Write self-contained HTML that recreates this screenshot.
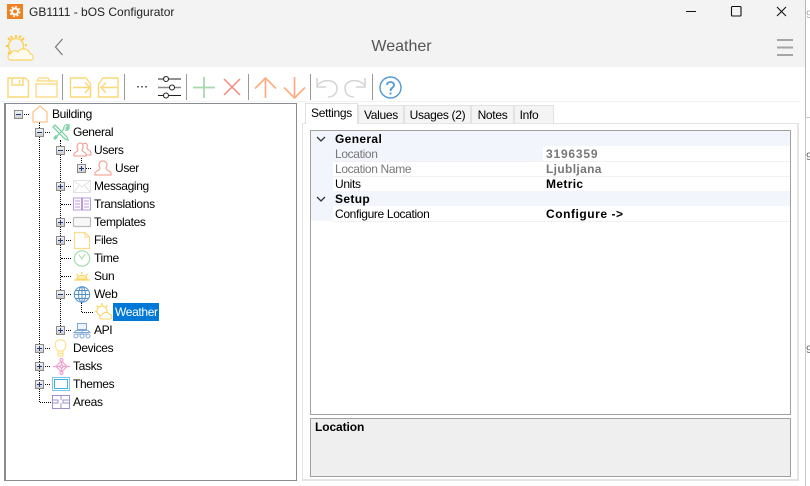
<!DOCTYPE html>
<html><head><meta charset="utf-8"><style>
html,body{margin:0;padding:0;width:810px;height:486px;overflow:hidden;background:#fff}
*{box-sizing:border-box}
.a{position:absolute}
.t{position:absolute;font:12px/15px "WenQuanYi Zen Hei","Liberation Sans",sans-serif;color:#000;white-space:nowrap;letter-spacing:-.35px}
.b{font-weight:bold;letter-spacing:.35px}
.tab{position:absolute;top:105px;height:18px;background:#f4f4f4;border:1px solid #e2e2e2;border-bottom:0;font:12px/18px "WenQuanYi Zen Hei","Liberation Sans",sans-serif;text-align:center;color:#000;letter-spacing:-.3px}
.exp{position:absolute;width:9px;height:9px;background:linear-gradient(#f2f2f2,#cfcfcf);border:1px solid #8a8a8a}
.exp:before{content:"";position:absolute;left:1px;top:3px;width:5px;height:1px;background:#1f3a7a}
.p:after{content:"";position:absolute;left:3px;top:1px;width:1px;height:5px;background:#1f3a7a}
.dv{position:absolute;width:0;border-left:1px dotted #000}
.dh{position:absolute;height:0;border-top:1px dotted #000}
.sep{position:absolute;top:74px;width:1px;height:26px;background:#999}
svg{position:absolute;overflow:visible;fill:none}
</style></head><body>
<div class="a" style="left:0;top:0;width:805px;height:67px;background:#f3f3f3"></div>
<div class="a" style="left:805px;top:0;width:1px;height:117px;background:#b8b8b8"></div>
<div class="a" style="left:805px;top:117px;width:5px;height:1px;background:#c8c8c8"></div>
<div class="a" style="left:805px;top:117px;width:1px;height:369px;background:#c8c8c8"></div>
<div class="t" style="left:806px;top:8px;color:#aaa;font-size:11px">9</div>
<div class="t" style="left:806px;top:150px;color:#666;font-size:11px">9</div>
<div class="t" style="left:806px;top:343px;color:#666;font-size:11px">9</div>

<!-- title bar -->
<div class="a" style="left:7px;top:4px;width:16px;height:15px;background:#ee8222"></div>
<svg style="left:7px;top:4px" width="16" height="15"><circle cx="8" cy="7.5" r="3" stroke="#fff" stroke-width="2"/><circle cx="8" cy="7.5" r="4.8" stroke="#fff" stroke-width="1.4" stroke-dasharray="2 1.77"/></svg>
<div class="t" style="left:29px;top:4px;font:12px/16px 'Liberation Sans',sans-serif;color:#222;letter-spacing:0">GB1111 - bOS Configurator</div>
<svg style="left:686px;top:5px" width="115" height="16" stroke="#111"><path d="M0 6.5H10"/><rect x="45.5" y="1.5" width="9.5" height="9.5" rx="1" stroke-width="1.1"/><path d="M91 2L100 11M100 2L91 11" stroke-width="1.1"/></svg>

<!-- header -->
<svg style="left:6px;top:34px" width="30" height="28" stroke="#fbd568" stroke-width="1.2"><circle cx="10" cy="12" r="7.500" stroke-width="1.600"/><path d="M10 1V3.500M2 4L4 6M0 12H2.500M18 4L16 6M21 11H19M2 20L4 18M14.500 1.500L13.500 4M5 2L6 4.500" stroke-width="2" stroke="#fbc83e"/><path d="M5 26C1 26 1 20 5 19.500C6 16 11 16 12 18C15 13 23 14 24 20C28 20 28 26 25 26Z" fill="#fdfaf0"/></svg>
<svg style="left:54px;top:38px" width="10" height="18" stroke="#777" stroke-width="1.2"><path d="M8.500 1L1.500 9L8.500 17"/></svg>
<div class="t" style="left:300px;top:38px;width:203px;text-align:center;font:16px/18px 'Liberation Sans',sans-serif;color:#555;letter-spacing:0">Weather</div>
<svg style="left:777px;top:38px" width="17" height="18" stroke="#a5a5a5" stroke-width="2"><path d="M0 2H16M0 9.500H16M0 17H16"/></svg>

<!-- toolbar -->
<div class="a" style="left:0;top:101px;width:800px;height:1px;background:#f2f2f2"></div>
<svg style="left:7px;top:76px" width="180" height="24" stroke="#fcd777" stroke-width="1.400">
<path d="M1 2H18L21.500 5V21H1Z"/><path d="M5 2V9H16V2M12.500 4V7.500"/>
<path d="M29 7V21H50V5H43L41 2H32L30 5H43M29 8H50" stroke-width="1.200"/>
<path d="M63.500 2H79L83.500 8V21H63.500ZM66 11.500H82M78 6.500L83 11.500L78 17"/>
<path d="M91.500 8L96 2H111V21H91.500ZM94 11.500H110M99 6.500L94 11.500L99 17" />
</svg>
<svg style="left:136px;top:86px" width="12" height="3"><rect x="1" y="0" width="2" height="1.500" fill="#666"/><rect x="5" y="0" width="2" height="1.500" fill="#666"/><rect x="9" y="0" width="2" height="1.500" fill="#666"/></svg>
<svg style="left:158px;top:76px" width="24" height="23" stroke="#222" stroke-width="1.100"><path d="M0 3H5M11 3H23M0 19.500H5M11 19.500H23"/><path d="M0 11.500H11M17 11.500H23" stroke="#888" stroke-width="1.500"/><circle cx="8" cy="3" r="2.500"/><circle cx="14" cy="11.500" r="2.500"/><circle cx="8" cy="19.500" r="2.500"/></svg>
<svg style="left:193px;top:76px" width="230" height="24" stroke-width="1.600">
<path d="M11 1V22M0 11.500H22" stroke="#a5d9ae" stroke-width="1.800"/>
<path d="M31 3L47 19M47 3L31 19" stroke="#f08a7c" stroke-width="1.500"/>
<path d="M72.500 22V2M62 12.500L72.500 2L83 12.500" stroke="#fbae85" stroke-width="1.700"/>
<path d="M101.500 1V22M91 11.500L101.500 22L112 11.500" stroke="#fbae85" stroke-width="1.700"/>
<path d="M124 2V11H133M124 10C129 2 144 3 144 12C144 18 140 21 135 21" stroke="#d4d4d4" stroke-width="1.500"/>
<path d="M172 2V11H163M172 10C167 2 152 3 152 12C152 18 156 21 161 21" stroke="#d4d4d4" stroke-width="1.500"/>
</svg>
<svg style="left:379px;top:76px" width="23" height="23"><circle cx="11.500" cy="11.500" r="10.500" stroke="#4f9ad6" stroke-width="1.400"/><path d="M8 9C8 5 15 5 15 9C15 12 11.500 11.500 11.500 15" stroke="#4f9ad6" stroke-width="1.800"/><rect x="10.500" y="16.500" width="2" height="2" fill="#4f9ad6"/></svg>
<div class="sep" style="left:62px"></div><div class="sep" style="left:124px"></div><div class="sep" style="left:186px"></div><div class="sep" style="left:248px"></div><div class="sep" style="left:310px"></div><div class="sep" style="left:372px"></div>

<!-- tree -->
<div class="a" style="left:4px;top:103px;height:378px;border:1px solid #888c90;border-width:1px 1px 1px 2px;width:293px"></div>
<div class="dv" style="left:39px;top:122px;height:280px"></div>
<div class="dv" style="left:60px;top:140px;height:190px"></div>
<div class="dv" style="left:81px;top:158px;height:5px"></div>
<div class="dv" style="left:81px;top:302px;height:10px"></div>
<div class="dh" style="left:20px;top:114px;width:9px"></div>
<div class="dh" style="left:41px;top:132px;width:9px"></div>
<div class="dh" style="left:62px;top:150px;width:9px"></div>
<div class="dh" style="left:83px;top:168px;width:8px"></div>
<div class="dh" style="left:62px;top:186px;width:9px"></div>
<div class="dh" style="left:61px;top:204px;width:10px"></div>
<div class="dh" style="left:62px;top:222px;width:9px"></div>
<div class="dh" style="left:62px;top:240px;width:9px"></div>
<div class="dh" style="left:61px;top:258px;width:10px"></div>
<div class="dh" style="left:61px;top:276px;width:10px"></div>
<div class="dh" style="left:62px;top:294px;width:9px"></div>
<div class="dh" style="left:82px;top:312px;width:11px"></div>
<div class="dh" style="left:62px;top:330px;width:9px"></div>
<div class="dh" style="left:41px;top:348px;width:9px"></div>
<div class="dh" style="left:41px;top:366px;width:9px"></div>
<div class="dh" style="left:41px;top:384px;width:9px"></div>
<div class="dh" style="left:40px;top:402px;width:11px"></div>

<div class="exp" style="left:14px;top:110px"></div>
<div class="exp" style="left:35px;top:128px"></div>
<div class="exp" style="left:56px;top:146px"></div>
<div class="exp p" style="left:77px;top:164px"></div>
<div class="exp p" style="left:56px;top:182px"></div>
<div class="exp p" style="left:56px;top:218px"></div>
<div class="exp p" style="left:56px;top:236px"></div>
<div class="exp" style="left:56px;top:290px"></div>
<div class="exp p" style="left:56px;top:326px"></div>
<div class="exp p" style="left:35px;top:344px"></div>
<div class="exp p" style="left:35px;top:362px"></div>
<div class="exp p" style="left:35px;top:380px"></div>

<svg style="left:32px;top:105px" width="16" height="18" stroke="#fbc78e" stroke-width="1.300"><path d="M1 7L8 1L15 7V17H1Z"/></svg>
<svg style="left:52px;top:124px" width="18" height="17" stroke="#7fd1a5" stroke-width="1.300"><path d="M1 3L3 1L15 13L16 16L13 15ZM4 13L12 5M12 5C11 2 14 0 17 1L14 4L15 5L17 3C17 6 15 7 13 6"/><path d="M2 15L5 12" stroke-width="3"/></svg>
<svg style="left:73px;top:142px" width="19" height="15" stroke="#f39a8e" stroke-width="1.100"><path d="M1 14V12C1 10 5 10 5 8C3 4 5 1 7 1C10 1 11 4 9 8C9 10 13 10 13 12V14ZM10 2C13 0 15 2 14 6C14 8 18 8 18 11V13H13"/></svg>
<svg style="left:94px;top:160px" width="18" height="16" stroke="#f5a699" stroke-width="1.200"><path d="M1 15V13C1 11 6 11 6 8C4 5 5 1 9 1C13 1 14 5 12 8C12 11 17 11 17 13V15Z"/></svg>
<svg style="left:73px;top:180px" width="18" height="13" stroke="#e2e2e2" fill="#f9f9f9"><rect x=".5" y=".5" width="17" height="12"/><path d="M.5 .5L9 7L17.500 .5M.5 12.500L6 6M17.500 12.500L12 6"/></svg>
<svg style="left:73px;top:197px" width="18" height="14" stroke="#b99adf" stroke-width="1.100"><path d="M.5 1H8.500V13H.5ZM9.500 1H17.500V13H9.500ZM2 4H7M2 7H7M2 10H7M11 4H16M11 7H16M11 10H16" /></svg>
<svg style="left:73px;top:217px" width="18" height="10" stroke="#bbb" stroke-width="1.200"><rect x=".5" y=".5" width="17" height="9" rx="1" fill="#f8f8f8"/></svg>
<svg style="left:74px;top:232px" width="16" height="17" stroke="#fbdc8d" stroke-width="1.200"><path d="M.5 .5H11L15.500 5V16.500H.5ZM11 .5V5H15.500"/></svg>
<svg style="left:73px;top:250px" width="18" height="17" stroke="#a2dca9" stroke-width="1.200"><circle cx="9" cy="8.500" r="7.700"/><path d="M6 5L9 9L12 4" stroke-width="1"/></svg>
<svg style="left:74px;top:272px" width="16" height="9" stroke="#fbd568" stroke-width="1.100"><path d="M3 7C3 2 13 2 13 7Z" fill="#fdeeb8"/><path d="M8 0V2M2.500 2L4 3.500M13.500 2L12 3.500M0 8H16" stroke-width="1.300"/></svg>
<svg style="left:73px;top:286px" width="18" height="17" stroke="#4f8fc9" stroke-width="1"><circle cx="9" cy="8.500" r="7.700"/><ellipse cx="9" cy="8.500" rx="3.500" ry="7.700"/><path d="M1 8.500H17M9 1V16M2.500 4.500H15.500M2.500 12.500H15.500"/></svg>
<div class="a" style="left:113px;top:303px;width:46px;height:18px;background:#0078d7"></div>
<svg style="left:95px;top:303px" width="18" height="17" stroke="#fbd568" stroke-width="1.100"><circle cx="7" cy="8" r="5"/><path d="M7 0V2.500M1.500 2.500L3 4M0 8.500H1.500M12.500 2.500L11 4" stroke-width="1.400"/><path d="M7 16C4 16 4 12.500 7 12C8 9 13 8.500 14 11C17 11 18 16 15 16Z" fill="#fff"/></svg>
<svg style="left:73px;top:323px" width="18" height="15" stroke="#7fa8d6" stroke-width="1"><rect x="4.500" y=".5" width="9" height="6" fill="#eef4fb"/><path d="M1 9.500H17L15 7.500H3ZM9 7V11M3 11H15"/><circle cx="3" cy="13" r="2"/><circle cx="9" cy="13" r="2"/><circle cx="15" cy="13" r="2"/></svg>
<svg style="left:54px;top:339px" width="13" height="18" stroke="#fbe28d" stroke-width="1.200"><path d="M4 12C0 8 0 .8 6.500 .8C13 .8 13 8 9 12ZM4 12V17H9V12M4 14.500H9"/></svg>
<svg style="left:53px;top:358px" width="17" height="17" stroke="#f0a0cc" stroke-width="1.200"><path d="M8.500 3L14 8.500L8.500 14L3 8.500ZM0 8.500H17M8.500 0V17"/><circle cx="8.500" cy="8.500" r="1.500" fill="#fff"/><circle cx="8.500" cy="2" r="1.500" fill="#fff"/><circle cx="8.500" cy="15" r="1.500" fill="#fff"/></svg>
<svg style="left:52px;top:377px" width="18" height="14" stroke="#3fb0e3"><rect x=".5" y=".5" width="17" height="13" stroke="#7fc7ea"/><rect x="2.500" y="2.500" width="13" height="9"/></svg>
<svg style="left:52px;top:395px" width="18" height="14" stroke="#a08ccf" stroke-width="1"><rect x=".5" y=".5" width="17" height="13"/><path d="M.5 5H6V8H.5M17.500 5H11V8H17.500M9 .5V5M9 8V13.500"/></svg>

<div class="t" style="left:52px;top:107px">Building</div>
<div class="t" style="left:73px;top:125px">General</div>
<div class="t" style="left:94px;top:143px">Users</div>
<div class="t" style="left:115px;top:161px">User</div>
<div class="t" style="left:94px;top:179px">Messaging</div>
<div class="t" style="left:94px;top:197px">Translations</div>
<div class="t" style="left:94px;top:215px">Templates</div>
<div class="t" style="left:94px;top:233px">Files</div>
<div class="t" style="left:94px;top:251px">Time</div>
<div class="t" style="left:94px;top:269px">Sun</div>
<div class="t" style="left:94px;top:287px">Web</div>
<div class="t" style="left:115px;top:305px;color:#fff">Weather</div>
<div class="t" style="left:94px;top:323px">API</div>
<div class="t" style="left:73px;top:341px">Devices</div>
<div class="t" style="left:73px;top:359px">Tasks</div>
<div class="t" style="left:73px;top:377px">Themes</div>
<div class="t" style="left:73px;top:395px">Areas</div>

<!-- tabs and panel -->
<div class="a" style="left:302px;top:123px;width:497px;height:358px;border:1px solid #e4e4e4;border-width:1px 2px 2px 1px"></div>
<div class="tab" style="left:358px;width:46px">Values</div>
<div class="tab" style="left:404px;width:67px">Usages (2)</div>
<div class="tab" style="left:471px;width:43px">Notes</div>
<div class="tab" style="left:514px;width:40px;padding-right:10px">Info</div>
<div class="tab" style="left:305px;top:103px;width:53px;height:21px;background:#fff;border-color:#e0e0e0;line-height:19px">Settings</div>

<!-- grid -->
<div class="a" style="left:310px;top:130px;width:481px;height:285px;border:1px solid #a0a0a0"></div>
<div class="a" style="left:311px;top:131px;width:479px;height:15px;background:#f2f6fc"></div>
<div class="a" style="left:311px;top:146px;width:232px;height:15px;background:#f2f6fc"></div>
<div class="a" style="left:311px;top:161px;width:22px;height:60px;background:#f2f6fc"></div>
<div class="a" style="left:311px;top:191px;width:479px;height:15px;background:#f2f6fc"></div>
<div class="a" style="left:333px;top:161px;width:457px;height:1px;background:#f0f0f0"></div>
<div class="a" style="left:333px;top:176px;width:457px;height:1px;background:#f0f0f0"></div>
<div class="a" style="left:333px;top:221px;width:457px;height:1px;background:#f0f0f0"></div>
<div class="a" style="left:543px;top:146px;width:247px;height:15px;background:#fff"></div>
<svg style="left:316px;top:135px" width="10" height="70" stroke="#333" stroke-width="1.300"><path d="M1 2L5 6L9 2M1 62L5 66L9 62"/></svg>
<div class="t b" style="left:335px;top:132px">General</div>
<div class="t" style="left:335px;top:147px;color:#777">Location</div>
<div class="t b" style="left:546px;top:147px;color:#777;letter-spacing:.8px">3196359</div>
<div class="t" style="left:335px;top:162px;color:#777">Location Name</div>
<div class="t b" style="left:546px;top:162px;color:#777">Ljubljana</div>
<div class="t" style="left:335px;top:177px">Units</div>
<div class="t b" style="left:546px;top:177px">Metric</div>
<div class="t b" style="left:335px;top:192px">Setup</div>
<div class="t" style="left:335px;top:207px">Configure Location</div>
<div class="t b" style="left:546px;top:207px;letter-spacing:.55px">Configure -&gt;</div>

<div class="a" style="left:310px;top:418px;width:481px;height:59px;background:#efefef;border:1px solid #a0a0a0"></div>
<div class="t b" style="left:315px;top:420px;letter-spacing:-.1px">Location</div>
</body></html>
